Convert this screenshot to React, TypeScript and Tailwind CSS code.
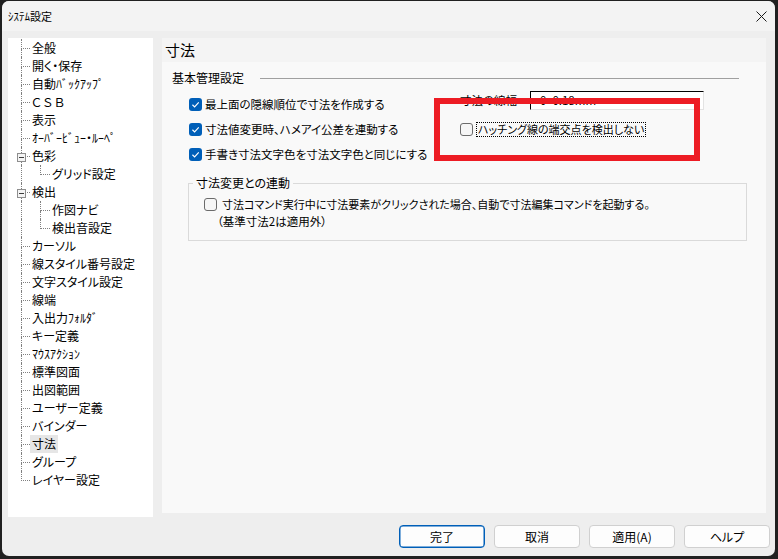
import React from 'react'

type Node = { label: string; open?: boolean; children?: string[]; selected?: boolean; wide?: boolean }

const tree: Node[] = [
  { label: '全般' },
  { label: '開く・保存' },
  { label: '自動ﾊﾞｯｸｱｯﾌﾟ' },
  { label: 'ＣＳＢ', wide: true },
  { label: '表示' },
  { label: 'ｵｰﾊﾞｰﾋﾞｭｰ・ﾙｰﾍﾟ' },
  { label: '色彩', open: true, children: ['グリッド設定'] },
  { label: '検出', open: true, children: ['作図ナビ', '検出音設定'] },
  { label: 'カーソル' },
  { label: '線スタイル番号設定' },
  { label: '文字スタイル設定' },
  { label: '線端' },
  { label: '入出力ﾌｫﾙﾀﾞ' },
  { label: 'キー定義' },
  { label: 'ﾏｳｽｱｸｼｮﾝ' },
  { label: '標準図面' },
  { label: '出図範囲' },
  { label: 'ユーザー定義' },
  { label: 'バインダー' },
  { label: '寸法', selected: true },
  { label: 'グループ' },
  { label: 'レイヤー設定' },
]

function TopRow({ node, last }: { node: Node; last: boolean }) {
  return (
    <div className="flex h-[18px]">
      <div className="relative ml-[13px] w-[9px] flex flex-col">
        <div className="h-[10px] border-l border-b border-dotted border-[#808080]" />
        {!last && <div className="flex-1 border-l border-dotted border-[#808080]" />}
        {node.children && (
          <span className="absolute left-[-4px] top-[6px] w-[9px] h-[9px] border border-[#8e8e8e] bg-[#f4f4f4] flex items-center justify-center">
            <span className="w-[5px] h-px bg-[#3c3c3c]" />
          </span>
        )}
      </div>
      <span
        className={`px-[2px] leading-[18px] ${node.wide ? 'tracking-[2px]' : ''} ${node.selected ? 'bg-[#e6e6e6]' : ''}`}
      >
        {node.label}
      </span>
    </div>
  )
}

function ChildRow({ label, last }: { label: string; last: boolean }) {
  return (
    <div className="flex h-[18px]">
      <div className="ml-[13px] w-[19px] border-l border-dotted border-[#808080]" />
      <div className="w-[10px] flex flex-col">
        <div className="h-[10px] border-l border-b border-dotted border-[#808080]" />
        {!last && <div className="flex-1 border-l border-dotted border-[#808080]" />}
      </div>
      <span className="px-[2px] leading-[18px]">{label}</span>
    </div>
  )
}

function Check({ checked }: { checked?: boolean }) {
  if (checked) {
    return (
      <span className="w-[13px] h-[13px] shrink-0 rounded-[3px] bg-[#005fb8] flex items-center justify-center">
        <svg width="9" height="9" viewBox="0 0 10 10">
          <path d="M1.6 5.3 L4 7.6 L8.6 2.6" stroke="white" strokeWidth="1.3" fill="none" />
        </svg>
      </span>
    )
  }
  return <span className="w-[13px] h-[13px] shrink-0 rounded-[3px] border border-[#6b6b6b] bg-[#f6f6f6]" />
}

function Btn({ label, primary }: { label: string; primary?: boolean }) {
  return (
    <button
      className={`w-[86px] h-[23px] rounded-[4px] border bg-[#fdfdfd] text-[12px] leading-none ${
        primary ? 'border-[#005fb8] shadow-[inset_0_0_0_0.5px_#005fb8]' : 'border-[#d0d0d0]'
      }`}
    >
      {label}
    </button>
  )
}

export default function App() {
  return (
    <div className="relative w-[778px] h-[559px] bg-[#202020] pl-[2px] pt-[1px] overflow-hidden text-[12px] text-black font-['Noto_Sans_CJK_JP',sans-serif] [font-feature-settings:'palt']">
      <div className="w-[773px] h-[555px] bg-[#eeeeee] rounded-[7px] overflow-hidden flex flex-col">
        {/* Title bar */}
        <div className="h-[30px] shrink-0 bg-[#f3f3f3] flex items-center justify-between pl-[6px] pr-[8px]">
          <span className="text-[11px]">ｼｽﾃﾑ設定</span>
          <svg width="11" height="11" viewBox="0 0 11 11">
            <path d="M0.5 0.5 L10.5 10.5 M10.5 0.5 L0.5 10.5" stroke="#1a1a1a" strokeWidth="1" />
          </svg>
        </div>

        {/* Body */}
        <div className="flex-1 flex flex-col pl-[6px] pr-[5px] pt-[7px]">
          <div className="flex items-start gap-[9px]">
            {/* Tree */}
            <div className="w-[145px] h-[479px] bg-white pt-[1px]">
              {tree.map((n, i) => (
                <React.Fragment key={n.label}>
                  <TopRow node={n} last={i === tree.length - 1} />
                  {n.children?.map((c, j) => (
                    <ChildRow key={c} label={c} last={j === n.children!.length - 1} />
                  ))}
                </React.Fragment>
              ))}
            </div>

            {/* Settings panel */}
            <div className="w-[604px] h-[475px] flex flex-col">
              <div className="h-[24px] shrink-0 bg-[#f4f4f4] pl-[3px] text-[15px] leading-[24px]">寸法</div>
              <div className="flex-1 bg-[#f9f9f9] pl-[10px] pt-[9px]">
                <div className="flex items-center h-[14px] w-[567px]">
                  <span>基本管理設定</span>
                  <div className="flex-1 h-px bg-[#a0a0a0] ml-[16px]" />
                </div>

                <div className="flex items-start mt-[7px]">
                  <div className="ml-[17px] w-[271px] flex flex-col text-[11.5px]">
                    {['最上面の隠線順位で寸法を作成する', '寸法値変更時、ハメアイ公差を連動する', '手書き寸法文字色を寸法文字色と同じにする'].map(t => (
                      <div key={t} className="h-[25px] flex items-center gap-[3px]">
                        <Check checked />
                        <span>{t}</span>
                      </div>
                    ))}
                  </div>
                  <div className="flex flex-col -mt-[1px]">
                    <div className="flex items-center h-[19px] text-[11.5px]">
                      <span className="w-[70px]">寸法の線幅</span>
                      <div className="w-[174px] h-[19px] border-t border-l border-black border-r border-b border-r-[#e3e3e3] border-b-[#e3e3e3] bg-white pl-[9px] leading-[17px]">
                        0<span className="ml-[6px]">0.18mm</span>
                      </div>
                    </div>
                    <div className="mt-[12px] flex items-center h-[15px] gap-[3px]">
                      <Check />
                      <span className="border border-dotted border-black px-[1px] leading-[13px] text-[11px]">ハッチング線の端交点を検出しない</span>
                    </div>
                  </div>
                </div>

                <fieldset className="mt-[9px] ml-[16px] w-[559px] border border-[#dadada] pb-[9px]">
                  <legend className="ml-[4px] px-[3px] leading-[14px]">寸法変更との連動</legend>
                  <div className="mt-[6px] h-[16px] pl-[15px] flex items-center gap-[5px]">
                    <Check />
                    <span className="text-[11px]">寸法コマンド実行中に寸法要素がクリックされた場合、自動で寸法編集コマンドを起動する。</span>
                  </div>
                  <div className="mt-[1px] h-[18px] pl-[28px] flex items-center text-[11.5px]">（基準寸法2は適用外）</div>
                </fieldset>
              </div>
            </div>
          </div>

          {/* Buttons */}
          <div className="mt-[8px] flex justify-end gap-[9px]">
            <Btn label="完了" primary />
            <Btn label="取消" />
            <Btn label="適用(A)" />
            <Btn label="ヘルプ" />
          </div>
        </div>
      </div>

      {/* annotation */}
      <div className="absolute left-[434px] top-[98px] w-[266px] h-[63px] border-[6px] border-[#ed1c24]" />
    </div>
  )
}
